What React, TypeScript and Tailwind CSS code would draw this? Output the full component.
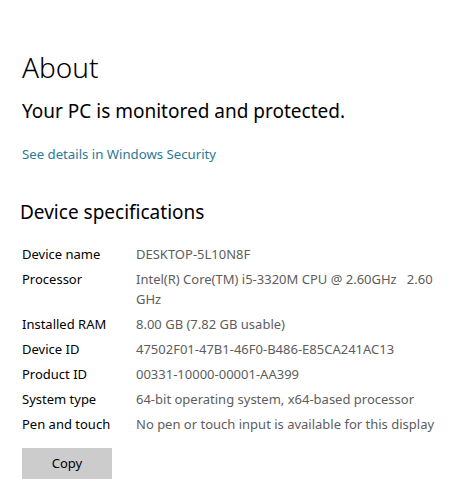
const specs: [string, string][] = [
  ["Device name", "DESKTOP-5L10N8F"],
  ["Processor", "Intel(R) Core(TM) i5-3320M CPU @ 2.60GHz   2.60 GHz"],
  ["Installed RAM", "8.00 GB (7.82 GB usable)"],
  ["Device ID", "47502F01-47B1-46F0-B486-E85CA241AC13"],
  ["Product ID", "00331-10000-00001-AA399"],
  ["System type", "64-bit operating system, x64-based processor"],
  ["Pen and touch", "No pen or touch input is available for this display"],
]

export default function App() {
  return (
    <div
      className="w-[467px] h-[489px] bg-white text-black overflow-hidden pl-[22px] pt-[48px]"
      style={{ fontFamily: '"Noto Sans", "Open Sans", sans-serif' }}
    >
      <h1 className="text-[28px] leading-[38px] font-light">About</h1>

      <p className="mt-[12px] text-[19px] leading-[26px]">Your PC is monitored and protected.</p>

      <a className="block mt-[20px] text-[13.2px] leading-[20px] text-[#2a7a95]">
        See details in Windows Security
      </a>

      <h2 className="mt-[35px] -ml-[2px] text-[19px] leading-[26px]">Device specifications</h2>

      <div className="mt-[19px] flex flex-col gap-[5px] text-[13px] leading-[20px]">
        {specs.map(([label, value]) => (
          <div key={label} className="flex">
            <div className="w-[114px] shrink-0">{label}</div>
            <div className="w-[312px] text-[#5d5d5d] whitespace-pre-wrap">{value}</div>
          </div>
        ))}
      </div>

      <button className="mt-[14px] w-[90px] h-[31px] bg-[#cccccc] text-[13px] text-black">
        Copy
      </button>
    </div>
  )
}
